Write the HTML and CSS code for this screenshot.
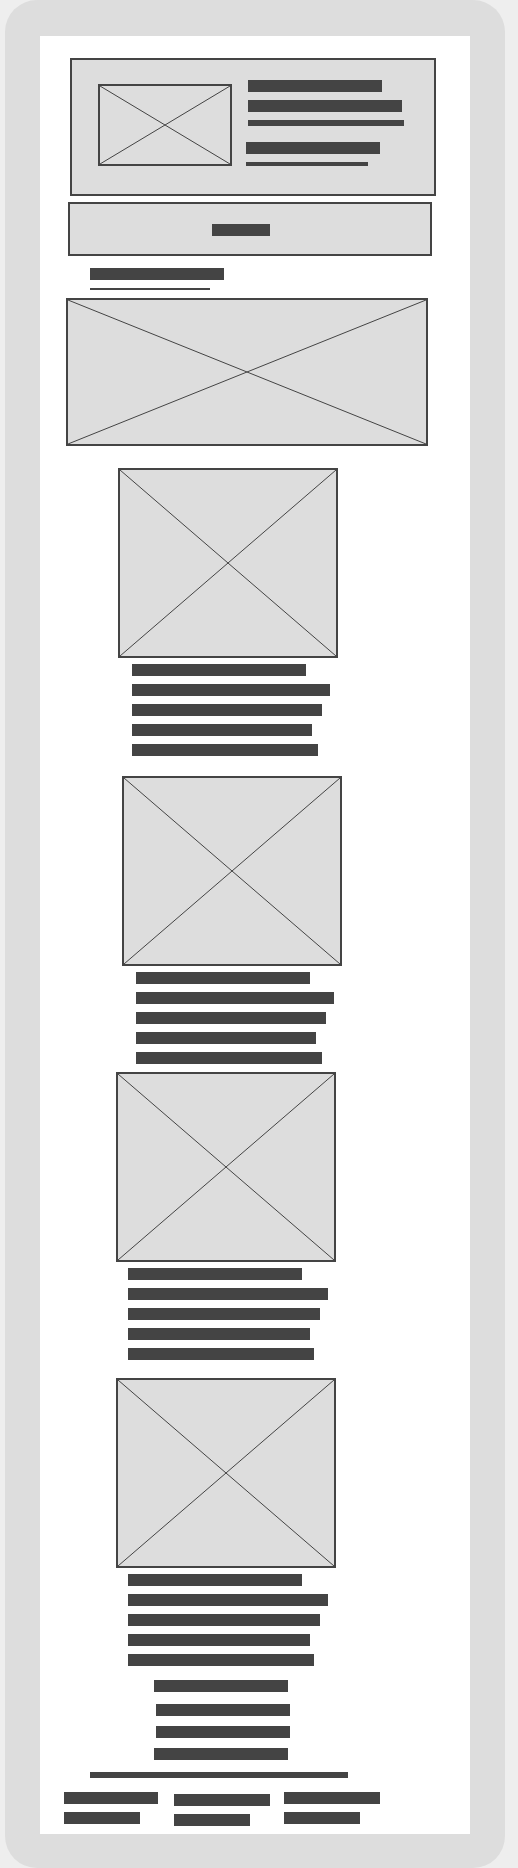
FILE: index.html
```html
<!DOCTYPE html>
<html>
<head>
<meta charset="utf-8">
<link rel="stylesheet" href="styles.css">
</head>
<body>
<div class="phone">
  <div class="screen">
    <div class="header">
      <div class="ph header-img"><svg viewBox="0 0 100 100" preserveAspectRatio="none"><line x1="0" y1="0" x2="100" y2="100"/><line x1="100" y1="0" x2="0" y2="100"/></svg></div>
      <div class="header-text">
        <div class="bar h12 ml2" style="width:134px"></div>
        <div class="bar h12 ml2 mt8" style="width:154px"></div>
        <div class="bar h6 ml2 mt8" style="width:156px"></div>
        <div class="bar h12 mt16" style="width:134px"></div>
        <div class="bar h4 mt8" style="width:122px"></div>
      </div>
    </div>
    <div class="button"><div class="bar h12" style="width:58px"></div></div>
    <div class="heading">
      <div class="bar h12" style="width:134px"></div>
      <div class="bar h2 mt8" style="width:120px"></div>
    </div>
    <div class="ph hero"><svg viewBox="0 0 100 100" preserveAspectRatio="none"><line x1="0" y1="0" x2="100" y2="100"/><line x1="100" y1="0" x2="0" y2="100"/></svg></div>

    <div class="card card1">
      <div class="ph card-img"><svg viewBox="0 0 100 100" preserveAspectRatio="none"><line x1="0" y1="0" x2="100" y2="100"/><line x1="100" y1="0" x2="0" y2="100"/></svg></div>
      <div class="lines">
        <div class="bar h12" style="width:174px"></div>
        <div class="bar h12 mt8" style="width:198px"></div>
        <div class="bar h12 mt8" style="width:190px"></div>
        <div class="bar h12 mt8" style="width:180px"></div>
        <div class="bar h12 mt8" style="width:186px"></div>
      </div>
    </div>
    <div class="card card2">
      <div class="ph card-img"><svg viewBox="0 0 100 100" preserveAspectRatio="none"><line x1="0" y1="0" x2="100" y2="100"/><line x1="100" y1="0" x2="0" y2="100"/></svg></div>
      <div class="lines">
        <div class="bar h12" style="width:174px"></div>
        <div class="bar h12 mt8" style="width:198px"></div>
        <div class="bar h12 mt8" style="width:190px"></div>
        <div class="bar h12 mt8" style="width:180px"></div>
        <div class="bar h12 mt8" style="width:186px"></div>
      </div>
    </div>
    <div class="card card3">
      <div class="ph card-img"><svg viewBox="0 0 100 100" preserveAspectRatio="none"><line x1="0" y1="0" x2="100" y2="100"/><line x1="100" y1="0" x2="0" y2="100"/></svg></div>
      <div class="lines">
        <div class="bar h12" style="width:174px"></div>
        <div class="bar h12 mt8" style="width:200px"></div>
        <div class="bar h12 mt8" style="width:192px"></div>
        <div class="bar h12 mt8" style="width:182px"></div>
        <div class="bar h12 mt8" style="width:186px"></div>
      </div>
    </div>
    <div class="card card4">
      <div class="ph card-img"><svg viewBox="0 0 100 100" preserveAspectRatio="none"><line x1="0" y1="0" x2="100" y2="100"/><line x1="100" y1="0" x2="0" y2="100"/></svg></div>
      <div class="lines">
        <div class="bar h12" style="width:174px"></div>
        <div class="bar h12 mt8" style="width:200px"></div>
        <div class="bar h12 mt8" style="width:192px"></div>
        <div class="bar h12 mt8" style="width:182px"></div>
        <div class="bar h12 mt8" style="width:186px"></div>
      </div>
    </div>

    <div class="links">
      <div class="bar h12 link-a" style="width:134px"></div>
      <div class="bar h12 link-b mt12" style="width:134px"></div>
      <div class="bar h12 link-b mt10" style="width:134px"></div>
      <div class="bar h12 link-a mt10" style="width:134px"></div>
    </div>
    <div class="bar h6 rule" style="width:258px"></div>
    <div class="footer">
      <div class="fcol fcol1">
        <div class="bar h12" style="width:94px"></div>
        <div class="bar h12 mt8" style="width:76px"></div>
      </div>
      <div class="fcol fcol2">
        <div class="bar h12" style="width:96px"></div>
        <div class="bar h12 mt8" style="width:76px"></div>
      </div>
      <div class="fcol fcol3">
        <div class="bar h12" style="width:96px"></div>
        <div class="bar h12 mt8" style="width:76px"></div>
      </div>
    </div>
  </div>
</div>
</body>
</html>
```

FILE: styles.css
```css
html, body {
  margin: 0;
  padding: 0;
  background: #eeeeee;
}
.phone {
  box-sizing: border-box;
  width: 500px;
  height: 1868px;
  margin-left: 5px;
  background: #dddddd;
  border-radius: 32px;
  padding: 36px 35px 0 35px;
}
.screen {
  background: #ffffff;
  height: 1798px;
  display: flex;
  flex-direction: column;
  align-items: flex-start;
}
.bar {
  background: #444444;
  flex: none;
}
.h2 { height: 2px; }
.h4 { height: 4px; }
.h6 { height: 6px; }
.h12 { height: 12px; }
.ml2 { margin-left: 2px; }
.mt8 { margin-top: 8px; }
.mt10 { margin-top: 10px; }
.mt12 { margin-top: 12px; }
.mt16 { margin-top: 16px; }

.ph {
  box-sizing: border-box;
  border: 2px solid #444444;
  background: #dddddd;
  flex: none;
}
.ph svg {
  display: block;
  width: 100%;
  height: 100%;
}
.ph line {
  stroke: #444444;
  stroke-width: 1;
  vector-effect: non-scaling-stroke;
}

.header {
  box-sizing: border-box;
  width: 366px;
  height: 138px;
  margin-top: 22px;
  margin-left: 30px;
  border: 2px solid #444444;
  background: #dddddd;
  display: flex;
  align-items: flex-start;
}
.header-img {
  width: 134px;
  height: 82px;
  margin-top: 24px;
  margin-left: 26px;
}
.header-text {
  margin-left: 14px;
  margin-top: 20px;
  display: flex;
  flex-direction: column;
}

.button {
  box-sizing: border-box;
  width: 364px;
  height: 54px;
  margin-top: 6px;
  margin-left: 28px;
  border: 2px solid #444444;
  background: #dddddd;
  padding: 20px 0 0 142px;
}

.heading {
  margin-top: 12px;
  margin-left: 50px;
}

.hero {
  width: 362px;
  height: 148px;
  margin-top: 8px;
  margin-left: 26px;
}

.card {
  display: flex;
  flex-direction: column;
  align-items: flex-start;
}
.card-img {
  width: 220px;
  height: 190px;
}
.lines {
  margin-top: 6px;
  margin-left: 14px;
}
.card1 { margin-top: 22px; margin-left: 78px; }
.card2 { margin-top: 20px; margin-left: 82px; }
.card3 { margin-top: 8px; margin-left: 76px; }
.card3 .lines { margin-left: 12px; }
.card4 { margin-top: 18px; margin-left: 76px; }
.card4 .lines { margin-left: 12px; }

.links {
  margin-top: 14px;
  display: flex;
  flex-direction: column;
}
.link-a { margin-left: 114px; }
.link-b { margin-left: 116px; }

.rule {
  margin-top: 12px;
  margin-left: 50px;
}

.footer {
  margin-top: 14px;
  display: flex;
  align-items: flex-start;
}
.fcol1 { margin-left: 24px; width: 94px; }
.fcol2 { margin-left: 16px; margin-top: 2px; width: 96px; }
.fcol3 { margin-left: 14px; width: 96px; }
```
